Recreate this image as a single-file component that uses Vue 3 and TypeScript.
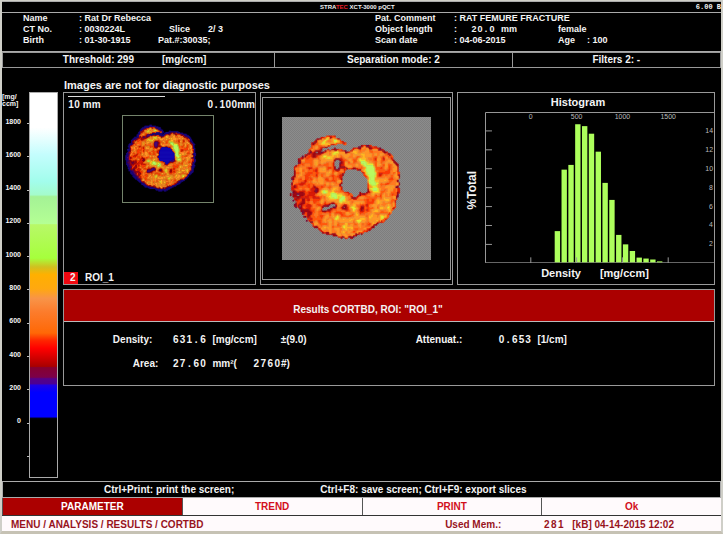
<script setup lang="ts">
type Point = [number, number]
type Layer = { color: string; d: string }

const scaleLabels: string[] = ['1800', '1600', '1400', '1200', '1000', '800', '600', '400', '200', '0', '']
const menuItems: string[] = ['PARAMETER', 'TREND', 'PRINT', 'Ok']

/* Histogram: percentage of voxels for each density class */
const classes: number[] = [3.3, 9.8, 10.3, 14.6, 14.4, 13.6, 11.7, 8.4, 6.6, 2.9, 1.9, 1.2, 0.5, 0.4, 0.3, 0.1]
const bars = classes.map((v, i) => {
  const h = v * 9.5
  return { x: 70 + i * 6.85, y: 151 - h, h }
})
const yTicks = [14, 12, 10, 8, 6, 4, 2].map((v) => ({ v, y: 152 - v * 9.5 }))
const xTicks = [0, 500, 1000, 1500].map((v) => ({ v, x: 46 + v * 0.092 }))

/* Synthetic CT slice, sampled on a coarse voxel grid */
const SLICE_W = 447
const SLICE_H = 429
const CELL = 4

const outline: Point[] = [
  [54, 128], [78, 108], [90, 82], [106, 66], [142, 58], [170, 64], [184, 74], [188, 82],
  [164, 80], [142, 86], [124, 94], [142, 100], [166, 98], [186, 102],
  [200, 104], [215, 96], [240, 88], [270, 90], [302, 99], [326, 116], [343, 142], [350, 180],
  [348, 228], [338, 270], [314, 300], [280, 324], [244, 344], [212, 359], [190, 362], [150, 352],
  [122, 346], [92, 322], [60, 296], [40, 268], [30, 236], [24, 208], [34, 180], [40, 150],
]
const medulla: Point[] = [
  [194, 156], [212, 152], [236, 158], [254, 178], [260, 204], [250, 222], [236, 226],
  [220, 244], [208, 238], [196, 224], [176, 220], [180, 196], [182, 172],
]

function inside(x: number, y: number, poly: Point[]): boolean {
  let hit = false
  for (let i = 0, j = poly.length - 1; i < poly.length; j = i++) {
    const [xi, yi] = poly[i]
    const [xj, yj] = poly[j]
    if (yi > y !== yj > y && x < ((xj - xi) * (y - yi)) / (yj - yi) + xi) hit = !hit
  }
  return hit
}

function segment(x: number, y: number, a: Point, b: Point): number {
  const dx = b[0] - a[0]
  const dy = b[1] - a[1]
  const t = Math.max(0, Math.min(1, ((x - a[0]) * dx + (y - a[1]) * dy) / (dx * dx + dy * dy)))
  return Math.hypot(x - a[0] - t * dx, y - a[1] - t * dy)
}

function edge(x: number, y: number, poly: Point[]): number {
  let best = Infinity
  for (let i = 0; i < poly.length; i++) best = Math.min(best, segment(x, y, poly[i], poly[(i + 1) % poly.length]))
  return inside(x, y, poly) ? best : -best
}

function hash(x: number, y: number): number {
  const s = Math.sin(x * 127.1 + y * 311.7) * 43758.5453
  return s - Math.floor(s)
}

function noise(x: number, y: number): number {
  const ix = Math.floor(x)
  const iy = Math.floor(y)
  const fx = x - ix
  const fy = y - iy
  const top = hash(ix, iy) * (1 - fx) + hash(ix + 1, iy) * fx
  const low = hash(ix, iy + 1) * (1 - fx) + hash(ix + 1, iy + 1) * fx
  return top * (1 - fy) + low * fy
}

function bump(d: number, width: number): number {
  return Math.exp(-(d * d) / (width * width))
}

function density(px: number, py: number): number {
  const x = px + CELL / 2
  const y = py + CELL / 2
  const rough = (noise(x / 8, y / 8) - 0.5) * 9
  const e = edge(x, y, outline) + rough + 2
  if (e < 0) return e > -11 ? 0.02 : -1
  const m = edge(x, y, medulla) + rough - 2
  if (m > 0) return 0
  let v = 0.58 + (noise(x / 8 + 9, y / 8) - 0.5) * 0.56 + (noise(x / 30, y / 30 + 5) - 0.5) * 0.16
  const arc = Math.min(segment(x, y, [242, 132], [266, 158]), segment(x, y, [266, 158], [276, 210]))
  v += 0.5 * bump(arc, 15)
  v += 0.38 * bump(segment(x, y, [128, 226], [184, 244]), 12)
  v += 0.14 * bump(segment(x, y, [150, 330], [310, 262]), 40)
  v += 0.16 * bump(segment(x, y, [114, 74], [170, 70]), 12)
  v += 0.12 * bump(segment(x, y, [130, 118], [210, 112]), 16)
  v -= 0.5 * bump(segment(x, y, [94, 112], [126, 98]), 8)
  v -= 0.56 * bump(Math.hypot(x - 168, y - 140), 15)
  v -= 0.68 * bump(segment(x, y, [126, 272], [152, 264]), 11)
  v -= 0.36 * bump(Math.hypot(x - 186, y - 272), 12)
  v -= 0.4 * bump(Math.hypot(x - 246, y - 272), 16)
  v -= 0.46 * bump(Math.hypot(x - 248, y - 220), 14)
  v -= 0.3 * bump(Math.hypot(x - 90, y - 162), 18)
  v -= 0.3 * bump(Math.hypot(x - 104, y - 214), 16)
  v -= 0.3 * bump(segment(x, y, [34, 220], [72, 290]), 22)
  if (e < 6) v -= 0.32
  if (m > -5) v -= 0.24
  return Math.max(0.05, v)
}

const ramp: [number, string][] = [
  [0.16, '#7a0838'], [0.28, '#a00a14'], [0.38, '#d81c08'], [0.47, '#fa3c08'], [0.56, '#ff5c10'],
  [0.66, '#ff7a22'], [0.77, '#ff9828'], [0.88, '#ffb824'], [0.98, '#e8ea30'], [9, '#b8fa60'],
]

function paint(v: number, low: boolean): string {
  if (v < -0.5) return ''
  if (v < 0.03) return low ? (v > 0.01 ? '#1c0878' : '#1408b0') : ''
  if (v < 0.13) return low ? '#4a0878' : ''
  return ramp.find(([limit]) => v < limit)![1]
}

function build(low: boolean): Layer[] {
  const layers = new Map<string, string>()
  for (let y = 0; y < SLICE_H; y += CELL) {
    let start = 0
    let current = ''
    for (let x = 0; x <= SLICE_W + CELL; x += CELL) {
      const color = x > SLICE_W ? '' : paint(density(x, y), low)
      if (color !== current) {
        if (current) layers.set(current, (layers.get(current) ?? '') + `M${start} ${y}H${x}v${CELL}H${start}z`)
        start = x
        current = color
      }
    }
  }
  return [...layers].map(([color, d]) => ({ color, d }))
}

const rawSlice = build(true)
const maskedSlice = build(false)
</script>

<template>
  <div class="screen">
    <header class="titlebar">
      <h1>STRA<em>TEC</em> XCT-3000 pQCT</h1>
      <span class="version">6.00 B</span>
    </header>

    <section class="patient">
      <span>Name</span><span class="wide">: Rat Dr Rebecca</span><span></span>
      <span>Pat. Comment</span><span class="wide">: RAT FEMURE FRACTURE</span>

      <span>CT No.</span><span>: 0030224L</span><span class="slice">Slice</span><span>2/ 3</span>
      <span>Object length</span>
      <span class="length">:<b class="cells small"><i v-for="(c, i) in '20.0'" :key="i">{{ c }}</i></b>mm</span>
      <span>female</span>

      <span>Birth</span><span>: 01-30-1915</span><span class="wide">Pat.#:30035;</span>
      <span>Scan date</span><span>: 04-06-2015</span><span class="age"><span>Age</span><span>: 100</span></span>
    </section>

    <section class="settings">
      <div class="threshold"><span>Threshold: 299</span><span>[mg/ccm]</span></div>
      <div>Separation mode: 2</div>
      <div>Filters 2: -</div>
    </section>

    <main>
      <p class="notice">Images are not for diagnostic purposes</p>

      <div class="gauge">
        <div class="unit">[mg/<br />ccm]</div>
        <ol class="labels">
          <li v-for="(label, i) in scaleLabels" :key="i"><span>{{ label }}</span></li>
        </ol>
        <div class="bar"></div>
      </div>

      <div class="content">
        <div class="panels">
          <section class="panel scan">
            <div class="ruler"></div>
            <div class="dims">
              <span><b class="cells small"><i v-for="(c, i) in '10'" :key="i">{{ c }}</i></b> mm</span>
              <span><b class="cells small"><i v-for="(c, i) in '0.100'" :key="i">{{ c }}</i></b>mm</span>
            </div>
            <svg class="thumb" viewBox="0 0 447 429" role="img">
              <path v-for="l in rawSlice" :key="l.color" :d="l.d" :fill="l.color" :stroke="l.color" />
            </svg>
            <div class="roi"><span class="badge">2</span><span>ROI_1</span></div>
          </section>

          <section class="panel masked">
            <div class="inner">
              <svg viewBox="0 0 447 429" role="img">
                <path v-for="l in maskedSlice" :key="l.color" :d="l.d" :fill="l.color" :stroke="l.color" />
              </svg>
            </div>
          </section>

          <section class="panel histogram">
            <h2>Histogram</h2>
            <div class="plot">
              <div class="axis"><span>%Total</span></div>
              <svg viewBox="0 0 230 152" role="img">
                <path class="frame" d="M230 .5H.5V151.5H230" />
                <g v-for="t in yTicks" :key="t.v">
                  <path class="frame" :d="`M0 ${t.y}h7`" />
                  <text x="229" :y="t.y + 2" text-anchor="end">{{ t.v }}</text>
                </g>
                <rect v-for="b in bars" :key="b.x" :x="b.x" :y="b.y" width="5.4" :height="b.h" fill="#adff5c" />
                <g v-for="t in xTicks" :key="t.v">
                  <path class="frame" :d="`M${t.x} 146v6`" />
                  <text :x="t.x" y="7" text-anchor="middle">{{ t.v }}</text>
                </g>
              </svg>
            </div>
            <div class="caption"><span>Density</span><span>[mg/ccm]</span></div>
          </section>
        </div>

        <section class="results">
          <h2>Results CORTBD, ROI: "ROI_1"</h2>
          <div class="rows">
            <span class="name">Density:</span>
            <b class="cells"><i v-for="(c, i) in '631.6'" :key="i">{{ c }}</i></b>
            <span>[mg/ccm]</span><span>±(9.0)</span>
            <span class="name attenuation">Attenuat.:</span>
            <b class="cells"><i v-for="(c, i) in '0.653'" :key="i">{{ c }}</i></b>
            <span>[1/cm]</span>
            <span class="name area">Area:</span>
            <b class="cells"><i v-for="(c, i) in '27.60'" :key="i">{{ c }}</i></b>
            <span class="count">mm²(<b class="cells"><i v-for="(c, i) in '2760'" :key="i">{{ c }}</i></b>#)</span>
          </div>
        </section>
      </div>
    </main>

    <footer>
      <div class="help">
        <span>Ctrl+Print: print the screen;</span>
        <span>Ctrl+F8: save screen; Ctrl+F9: export slices</span>
      </div>
      <nav class="menu">
        <button v-for="(item, i) in menuItems" :key="item" type="button" :class="{ active: i === 0 }">{{ item }}</button>
      </nav>
      <div class="status">
        <span>MENU / ANALYSIS / RESULTS / CORTBD</span>
        <span class="memory">Used Mem.:</span>
        <b class="cells"><i v-for="(c, i) in '281'" :key="i">{{ c }}</i></b>
        <span>[kB] 04-14-2015 12:02</span>
      </div>
    </footer>
  </div>
</template>

<style>
body {
  background: #000;
}
</style>

<style scoped>
* {
  box-sizing: border-box;
}
.screen {
  display: flex;
  flex-direction: column;
  min-height: 100vh;
  border: 2px solid #cfcfc8;
  border-top-width: 1px;
  border-bottom: 3px solid #c6c2b4;
  background: #000;
  color: #f4f4f4;
  font: bold 10px/12px 'Liberation Sans', Arial, sans-serif;
}
h1,
h2,
p,
ol {
  margin: 0;
  padding: 0;
  font: inherit;
  list-style: none;
}
svg {
  display: block;
}
.cells {
  display: inline-flex;
}
.cells i {
  width: 7px;
  font-style: normal;
  text-align: center;
}
.cells.small i {
  width: 6px;
}
.titlebar {
  display: grid;
  grid-template-columns: 318fr 401fr;
  height: 12px;
  padding-top: 1px;
  border-top: 1px solid #aaa;
  border-bottom: 1px solid #aaa;
  font-size: 6px;
  line-height: 9px;
  overflow: hidden;
}
.titlebar h1 {
  grid-column: 2;
  grid-row: 1;
}
.titlebar em {
  font-style: normal;
  color: #e8202c;
}
.version {
  grid-column: 2;
  grid-row: 1;
  text-align: right;
  font-family: 'Liberation Mono', monospace;
  font-size: 7px;
}
.patient {
  display: grid;
  grid-template-columns:
    minmax(0, 56fr) minmax(0, 79fr) minmax(0, 50fr) minmax(0, 167fr) minmax(0, 79fr)
    minmax(0, 104fr) minmax(0, 163fr);
  padding: 0 0 5px 21px;
  border-bottom: 1px solid #aaa;
  font-size: 9px;
  line-height: 11px;
  white-space: pre;
}
.wide {
  grid-column: span 2;
}
.slice {
  padding-left: 11px;
}
.length .cells {
  margin: 0 6px 0 14px;
}
.age {
  display: flex;
  gap: 12px;
}
.settings {
  display: grid;
  grid-template-columns: 272fr 238fr 209fr;
  border: 1px solid #999;
  line-height: 14px;
  text-align: center;
}
.settings > div + div {
  border-left: 1px solid #999;
}
.threshold {
  display: flex;
  justify-content: center;
  gap: 28px;
  padding-right: 8px;
}
main {
  flex: 1;
  display: grid;
  grid-template-columns: 56px minmax(0, 1fr);
  grid-template-rows: auto 1fr;
  column-gap: 5px;
  padding: 10px 6px 3px 0;
}
.notice {
  grid-column: 2;
  padding: 0 1px;
  font-size: 11px;
  line-height: 14px;
}
.gauge {
  display: grid;
  grid-template-columns: 27px 29px;
  position: relative;
}
.unit {
  position: absolute;
  left: 0;
  top: 1px;
  font-size: 7px;
  line-height: 7px;
}
.labels {
  display: grid;
  grid-auto-rows: 1fr;
  padding: 15px 0 5px;
  font-size: 7px;
  line-height: 8px;
}
.labels li {
  display: flex;
  align-items: center;
  justify-content: flex-end;
  gap: 6px;
}
.labels span {
  padding-bottom: 4px;
}
.labels li::after {
  content: '';
  width: 2px;
  height: 1px;
  background: #bbb;
}
.bar {
  border: 1px solid #aaa;
  background: linear-gradient(
    #fff 0 9%, #c4fdfd 16%, #a2fdec 23%, #a4fbcc 26.5%, #a4f296 27%, #b4ff94 34%,
    #b8f868 34.3%, #a6ff3c 43%, #d0c020 45.3%, #ffb000 47.3%, #ffa810 51%, #f89448 53.5%,
    #fc7c2c 57%, #ff6806 62.5%, #ff2400 64.5%, #f00 66.5%, #a80000 71.2%, #860030 71.5%,
    #7c0048 74%, #560088 74.4%, #4c0094 75.8%, #2000e4 76%, #00f 78% 84.3%, #000 84.8%
  );
}
.content {
  display: flex;
  flex-direction: column;
  gap: 4px;
}
.panels {
  display: grid;
  grid-template-columns: minmax(0, 193fr) minmax(0, 193fr) minmax(0, 258fr);
  gap: 4px;
}
.panel {
  border: 1px solid #999;
}
.scan {
  display: flex;
  flex-direction: column;
  aspect-ratio: 1;
}
.ruler {
  width: 51%;
  margin: 3px 0 0 4px;
  border-top: 1px solid #ddd;
}
.dims {
  display: flex;
  justify-content: space-between;
  padding: 2px 0 0 4px;
}
.thumb {
  width: 48%;
  margin: 4px 0 0 58px;
  border: 1px solid #74846c;
}
.roi {
  display: flex;
  gap: 7px;
  margin-top: auto;
}
.badge {
  width: 14px;
  background: #f00810;
  padding-left: 6px;
}
.masked {
  aspect-ratio: 1;
  padding: 4px 1px;
}
.inner {
  display: grid;
  place-items: center;
  height: 100%;
  border: 1px solid #999;
}
.inner svg {
  width: 80%;
  background: repeating-conic-gradient(#7e7e7e 0 25%, #8c8c8c 0 50%) 0 0 / 2px 2px;
}
.histogram {
  display: flex;
  flex-direction: column;
  font-size: 11px;
}
.histogram h2 {
  padding: 3px 16px 4px 0;
  text-align: center;
}
.plot {
  display: grid;
  grid-template-columns: 27px minmax(0, 1fr);
}
.axis {
  display: flex;
  align-items: center;
  justify-content: center;
  padding-top: 6px;
  font-size: 12px;
}
.axis span {
  writing-mode: vertical-rl;
  transform: rotate(180deg);
}
.plot svg {
  width: 100%;
}
.plot text {
  fill: #bbb;
  font-size: 7px;
  font-weight: normal;
}
.frame {
  fill: none;
  stroke: #999;
}
.caption {
  display: flex;
  justify-content: center;
  gap: 19px;
  padding: 4px 0 0 18px;
}
.results {
  border: 1px solid #999;
}
.results h2 {
  padding: 14px 42px 5px 0;
  border-bottom: 1px solid #bbb;
  background: #ab0000;
  text-align: center;
}
.rows {
  display: grid;
  grid-template-columns:
    minmax(0, 100fr) minmax(0, 36fr) minmax(0, 62fr) minmax(0, 109fr) minmax(0, 94fr)
    minmax(0, 35fr) minmax(0, 176fr);
  column-gap: 6px;
  row-gap: 12px;
  padding: 12px 0 15px;
  white-space: nowrap;
}
.rows .name {
  padding-right: 12px;
  text-align: right;
}
.rows .name.area {
  padding-right: 6px;
}
.rows .name.attenuation {
  padding-right: 28px;
}
.rows .cells {
  margin-left: 2px;
}
.rows .count .cells {
  margin-left: 16px;
}
.help {
  display: flex;
  gap: 86px;
  padding: 2px 0 1px 101px;
  border: 1px solid #aaa;
}
.menu {
  display: grid;
  grid-template-columns: repeat(4, 1fr);
  border-bottom: 1px solid #333;
}
.menu button {
  margin: 0;
  padding: 3px 0 2px;
  border: 0;
  border-left: 1px solid #555;
  border-radius: 0;
  background: #fffafc;
  color: #d2101c;
  font: inherit;
}
.menu .active {
  background: #ab0000;
  color: #fff;
}
.status {
  display: flex;
  padding: 3px 47px 0 9px;
  background: #fffafc;
  color: #98141c;
}
.memory {
  margin: 0 42px 0 auto;
}
.status .cells {
  margin-right: 8px;
}
</style>
